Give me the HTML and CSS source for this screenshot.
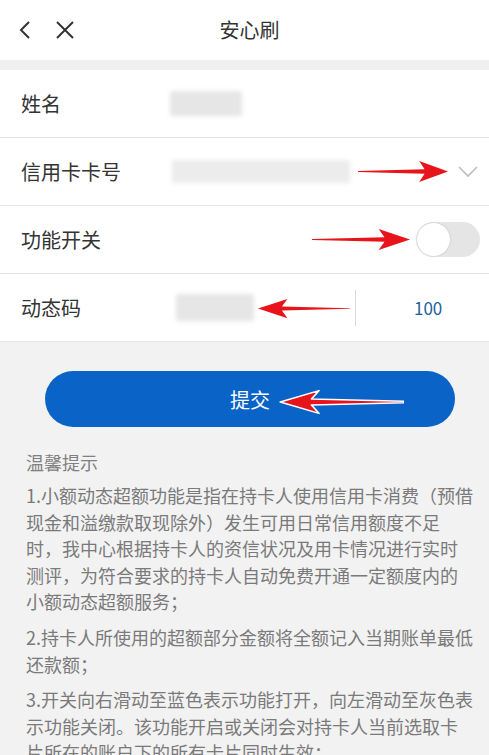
FILE: index.html
```html
<!DOCTYPE html>
<html lang="zh-CN">
<head>
<meta charset="utf-8">
<title>安心刷</title>
<link rel="stylesheet" href="styles.css">
</head>
<body>
<div class="page">
  <header class="header">
    <div class="nav">
      <svg class="nav-icon back" viewBox="0 0 14 20" width="14" height="20"><path d="M11 2 L3 10 L11 18" fill="none" stroke="#333" stroke-width="2"/></svg>
      <svg class="nav-icon close" viewBox="0 0 20 20" width="20" height="20"><path d="M2 2 L18 18 M18 2 L2 18" fill="none" stroke="#333" stroke-width="2"/></svg>
    </div>
    <div class="title">安心刷</div>
    <div class="nav-spacer"></div>
  </header>
  <div class="band"></div>
  <section class="form">
    <div class="row">
      <div class="label">姓名</div>
      <div class="blur blur-name"></div>
    </div>
    <div class="row">
      <div class="label">信用卡卡号</div>
      <div class="blur blur-card"></div>
      <svg class="chevron" viewBox="0 0 20 12" width="20" height="12"><path d="M1 1 L10 10 L19 1" fill="none" stroke="#bdbdbd" stroke-width="1.6"/></svg>
      <svg class="arrow arrow-card" viewBox="0 0 100 24" preserveAspectRatio="none"><path d="M0 11.6 L74 9.6 L68 1 L100 12 L68 23 L74 14.4 L0 12.4 Z" fill="#e8141b"/></svg>
    </div>
    <div class="row">
      <div class="label">功能开关</div>
      <div class="toggle"><span class="knob"></span></div>
      <svg class="arrow arrow-switch" viewBox="0 0 100 24" preserveAspectRatio="none"><path d="M0 11.6 L74 9.6 L68 1 L100 12 L68 23 L74 14.4 L0 12.4 Z" fill="#e8141b"/></svg>
    </div>
    <div class="row">
      <div class="label label-code">动态码</div>
      <div class="code-input"><div class="blur blur-code"></div></div>
      <div class="send">100</div>
      <svg class="arrow arrow-code" viewBox="0 0 100 24" preserveAspectRatio="none"><path d="M100 11.6 L26 9.6 L32 1 L0 12 L32 23 L26 14.4 L100 12.4 Z" fill="#e8141b"/></svg>
    </div>
  </section>
  <section class="actions">
    <button class="submit">提交</button>
    <svg class="arrow arrow-submit" viewBox="0 0 100 24" preserveAspectRatio="none"><path d="M100 11.3 L26 9.3 L32 1.5 L1 12 L32 22.5 L26 14.7 L100 12.7 Z" fill="#e8141b" stroke="#ffffff" stroke-width="1.4" stroke-linejoin="round"/></svg>
    <div class="tips">
      <h2 class="tips-title">温馨提示</h2>
      <p class="tip">1.小额动态超额功能是指在持卡人使用信用卡消费（预借现金和溢缴款取现除外）发生可用日常信用额度不足时，我中心根据持卡人的资信状况及用卡情况进行实时测评，为符合要求的持卡人自动免费开通一定额度内的小额动态超额服务；</p>
      <p class="tip">2.持卡人所使用的超额部分金额将全额记入当期账单最低还款额；</p>
      <p class="tip">3.开关向右滑动至蓝色表示功能打开，向左滑动至灰色表示功能关闭。该功能开启或关闭会对持卡人当前选取卡片所在的账户下的所有卡片同时生效；</p>
    </div>
  </section>
</div>
</body>
</html>
```
FILE: styles.css
```css
* { box-sizing: border-box; }
html, body { margin: 0; padding: 0; }
body {
  font-family: "Noto Sans CJK SC", "Noto Sans", sans-serif;
  background: #f2f2f2;
  color: #333;
  width: 489px;
  height: 755px;
  overflow: hidden;
}
.page { width: 489px; }

.header {
  height: 60px;
  background: #fff;
  display: grid;
  grid-template-columns: 1fr auto 1fr;
  align-items: center;
}
.nav {
  display: flex;
  align-items: center;
  padding-left: 18px;
  gap: 23px;
}
.nav-icon { display: block; }
.title {
  font-size: 20px;
  color: #333;
  padding-left: 10px;
  line-height: 1;
}

.band { height: 10px; background: #f0f0f0; }

.form { background: #fff; }
.row {
  position: relative;
  height: 68px;
  border-bottom: 1px solid #e4e4e4;
  display: flex;
  align-items: center;
  padding-left: 21px;
}
.label {
  width: 149px;
  flex: none;
  font-size: 20px;
  color: #333;
}
.label-code { width: 137px; }

.blur {
  background: #e6e6e6;
  filter: blur(2px);
  border-radius: 2px;
}
.blur-name { width: 72px; height: 25px; }
.blur-card { width: 178px; height: 23px; margin-left: 2px; background: #ececec; }
.blur-code { width: 78px; height: 27px; }

.chevron { margin-left: auto; margin-right: 11px; display: block; }

.toggle {
  margin-left: auto;
  margin-right: 9px;
  width: 64px;
  height: 35px;
  border-radius: 18px;
  background: #e5e5e5;
  position: relative;
}
.knob {
  position: absolute;
  left: 1px;
  top: 1px;
  width: 33px;
  height: 33px;
  border-radius: 50%;
  background: #fff;
  box-shadow: 0 0 2px rgba(0,0,0,0.18);
}

.code-input {
  width: 198px;
  height: 36px;
  display: flex;
  align-items: center;
  padding-left: 18px;
  border-right: 1px solid #dcdcdc;
}
.send {
  margin-left: 58px;
  font-size: 17px;
  color: #1f5f9e;
}

.arrow { position: absolute; display: block; }
.arrow-card { left: 358px; top: 22px; width: 90px; height: 23px; }
.arrow-switch { left: 312px; top: 22px; width: 98px; height: 23px; }
.arrow-code { left: 258px; top: 24px; width: 92px; height: 21px; }

.actions {
  position: relative;
  padding: 29px 0 0;
}
.submit {
  display: block;
  margin: 0 0 0 45px;
  width: 410px;
  height: 56px;
  border: none;
  border-radius: 28px;
  background: #0a63c7;
  color: #fff;
  font-family: "Noto Sans CJK SC", sans-serif;
  font-size: 20px;
  padding: 0;
}
.arrow-submit { left: 279px; top: 47px; width: 125px; height: 26px; }

.tips {
  padding: 22px 15px 0 26px;
}
.tips-title {
  margin: 0 0 7px;
  font-size: 18px;
  font-weight: normal;
  color: #808080;
  line-height: 26px;
}
.tip {
  margin: 0 0 9px;
  font-size: 18px;
  line-height: 26.6px;
  color: #7a7a7a;
}
```
